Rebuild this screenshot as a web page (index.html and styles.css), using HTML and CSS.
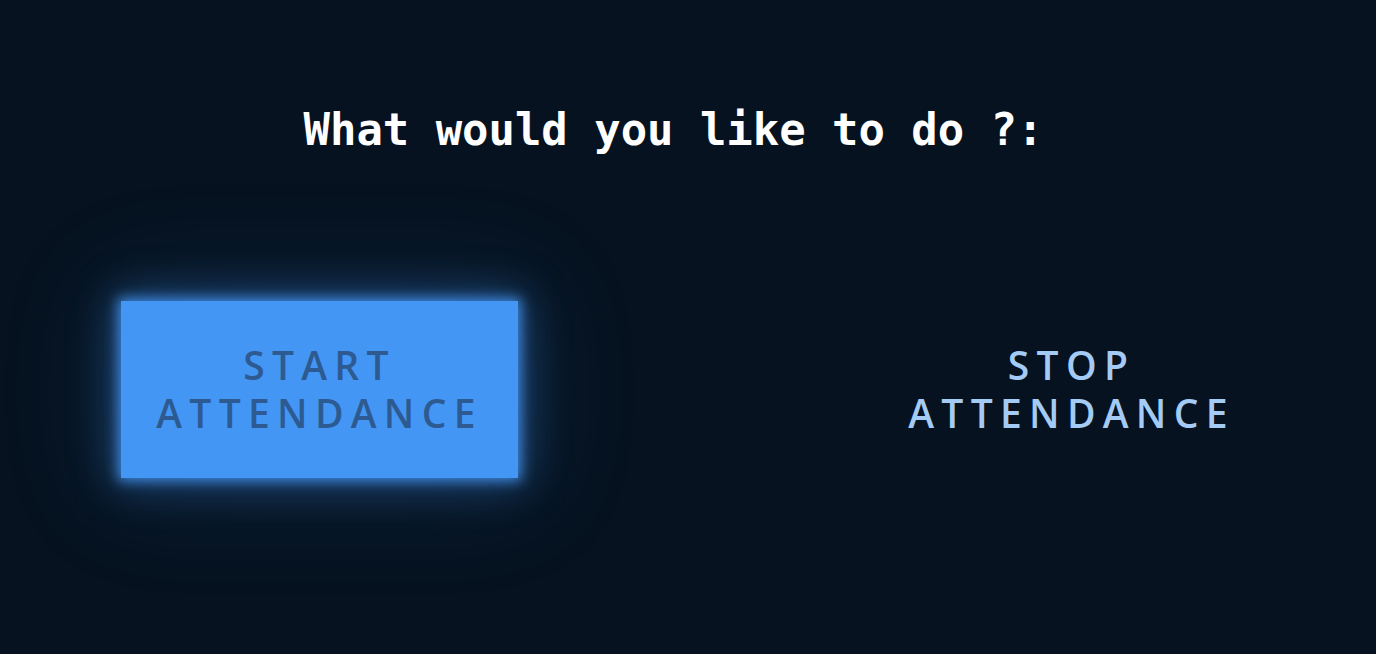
FILE: index.html
```html
<!DOCTYPE html>
<html lang="en">
<head>
<meta charset="utf-8">
<title>Attendance</title>
<link rel="stylesheet" href="styles.css">
</head>
<body>
<main class="page">
  <h1 class="title">What would you like to do ?:</h1>
  <div class="actions">
    <button class="btn btn-active">START<br>ATTENDANCE</button>
    <button class="btn">STOP<br>ATTENDANCE</button>
  </div>
</main>
</body>
</html>
```

FILE: styles.css
```css
html, body {
  margin: 0;
  padding: 0;
  background: #06121f;
  height: 100%;
}
.page {
  display: flex;
  flex-direction: column;
  height: 654px;
  overflow: hidden;
}
.title {
  margin: 104px 0 0 0;
  padding-right: 29px;
  text-align: center;
  font-family: "DejaVu Sans Mono", monospace;
  font-weight: bold;
  font-size: 43.9px;
  line-height: 52px;
  color: #ffffff;
}
.actions {
  display: flex;
  gap: 355px;
  padding-left: 121px;
  margin-top: 145px;
}
.btn {
  width: 397px;
  height: 177px;
  border: 0;
  margin: 0;
  padding: 0 0 2px 0;
  background: transparent;
  font-family: "Open Sans", sans-serif;
  font-weight: 600;
  font-size: 39px;
  line-height: 48px;
  letter-spacing: 7.3px;
  color: #a3cbf5;
  text-align: center;
}
.btn-active {
  background: #4496f5;
  color: #2d5b91;
  box-shadow: 0 0 12px 3px rgba(68, 150, 245, 0.85),
              0 0 40px 8px rgba(68, 150, 245, 0.35),
              0 0 110px 20px rgba(68, 150, 245, 0.12);
}
```
